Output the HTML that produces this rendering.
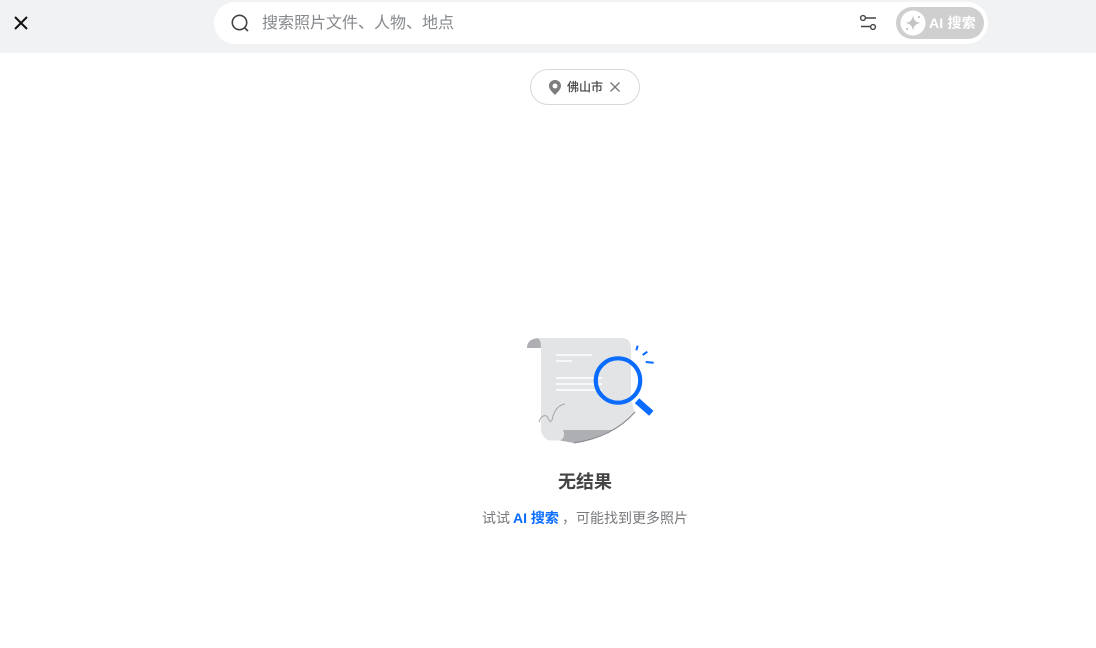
<!DOCTYPE html>
<html lang="zh"><head><meta charset="utf-8"><style>
html,body{margin:0;padding:0;width:1096px;height:648px;background:#fff;overflow:hidden;font-family:"Liberation Sans","Noto Sans CJK SC",sans-serif}
.a{position:absolute;white-space:nowrap}
</style></head><body>
<div class="a" style="left:0;top:0;width:1096px;height:53px;background:#f1f2f4"></div>
<svg class="a" style="left:0;top:0" width="1096" height="53">
<path d="M15 17L27 29M27 17L15 29" stroke="#111" stroke-width="2" fill="none"/>
</svg>
<div class="a" style="left:214px;top:2px;width:774px;height:42px;background:#fff;border-radius:21px"></div>
<svg class="a" style="left:0;top:0" width="1096" height="53">
<circle cx="239.5" cy="22.5" r="7.2" stroke="#444" stroke-width="1.6" fill="none"/>
<path d="M244.5 27.8L248 31" stroke="#444" stroke-width="1.6" fill="none"/>
<path d="M865 18H876M861 26.5H871" stroke="#444" stroke-width="1.5" fill="none"/>
<circle cx="863" cy="18" r="2.4" stroke="#444" stroke-width="1.4" fill="#fff"/>
<circle cx="873" cy="27" r="2.4" stroke="#444" stroke-width="1.4" fill="#fff"/>
<rect x="896" y="7" width="88" height="32" rx="16" fill="#cfcfcf"/>
<circle cx="913" cy="23" r="12.5" fill="#fff"/>
<path d="M913 15.5C914 20.5 915.5 22 920.5 23C915.5 24 914 25.5 913 30.5C912 25.5 910.5 24 905.5 23C910.5 22 912 20.5 913 15.5Z" fill="#c4c4c4"/>
<circle cx="919" cy="17" r="1.1" fill="#c4c4c4"/>
<circle cx="907" cy="29" r="1.1" fill="#c4c4c4"/>
</svg>
<div class="a" style="left:262px;top:13px;font-size:16px;line-height:22px;color:#85888c">搜索照片文件、人物、地点</div>
<div class="a" style="left:929px;top:14px;font-size:14px;line-height:18px;font-weight:700;color:#fff;letter-spacing:.2px">AI 搜索</div>
<div class="a" style="left:530px;top:69px;width:108px;height:34px;border:1px solid #d8d8d8;border-radius:18px;background:#fff"></div>
<svg class="a" style="left:540px;top:72px" width="90" height="30">
<path d="M15 8C11.5 8 9 10.6 9 13.8C9 17.6 13 20.8 15 23C17 20.8 21 17.6 21 13.8C21 10.6 18.5 8 15 8Z" fill="#7d7d7d"/>
<circle cx="15" cy="14" r="2.5" fill="#fff"/>
<path d="M70.5 10.5L79.5 19.5M79.5 10.5L70.5 19.5" stroke="#777" stroke-width="1.3" fill="none"/>
</svg>
<div class="a" style="left:567px;top:79px;font-size:12px;line-height:16px;font-weight:500;color:#444">佛山市</div>
<svg class="a" style="left:515px;top:330px" width="150" height="120" viewBox="0 0 150 120">
<path d="M12 18C12 11 17 8 26 8V18Z" fill="#adafb3"/>
<path d="M21 8H106C112 8 116 11 116 18V70L120 82C112 90 105 95 97 100H48C50 104 49 110 44 110.5H37C30 110.5 26 105 26 98V18C26 12 25 8 21 8Z" fill="#e3e4e6"/>
<path d="M48 100H97C85 106 72 111 59 113L45 110.5C49 109 50 104 48 100Z" fill="#adafb3"/>
<path d="M59 113C85 109 105 99 120 82" stroke="#85888d" stroke-width="1.1" fill="none"/>
<path d="M41 25H77M41 31H57M41 48H87M41 54H87M41 60H87" stroke="#fff" stroke-width="1.6" fill="none"/>
<path d="M24 92C26 85 31 84 33 88C35 92 35 93 37 90C39 80 44 75 50 74" stroke="#a5a7aa" stroke-width="1" fill="none"/>
<circle cx="103" cy="50.5" r="22.2" stroke="#0a6cff" stroke-width="4.2" fill="none"/>
<path d="M122 70.7L136.3 83.3" stroke="#0a6cff" stroke-width="6.6" fill="none"/>
<path d="M122.7 15.7L121.3 20.3M132.3 21.7L127.7 25M130.7 32L138.7 32.7" stroke="#0a6cff" stroke-width="2" fill="none"/>
</svg>
<div class="a" style="left:558px;top:471px;font-size:18px;line-height:22px;font-weight:700;color:#444">无结果</div>
<div class="a" style="left:482px;top:509px;font-size:14px;line-height:18px;color:#77797c">试试</div>
<div class="a" style="left:513px;top:509px;font-size:14px;line-height:18px;font-weight:700;color:#0a6cff">AI 搜索</div>
<div class="a" style="left:562px;top:509px;font-size:14px;line-height:18px;color:#77797c">，</div>
<div class="a" style="left:576px;top:509px;font-size:14px;line-height:18px;color:#77797c">可能找到更多照片</div>
</body></html>
